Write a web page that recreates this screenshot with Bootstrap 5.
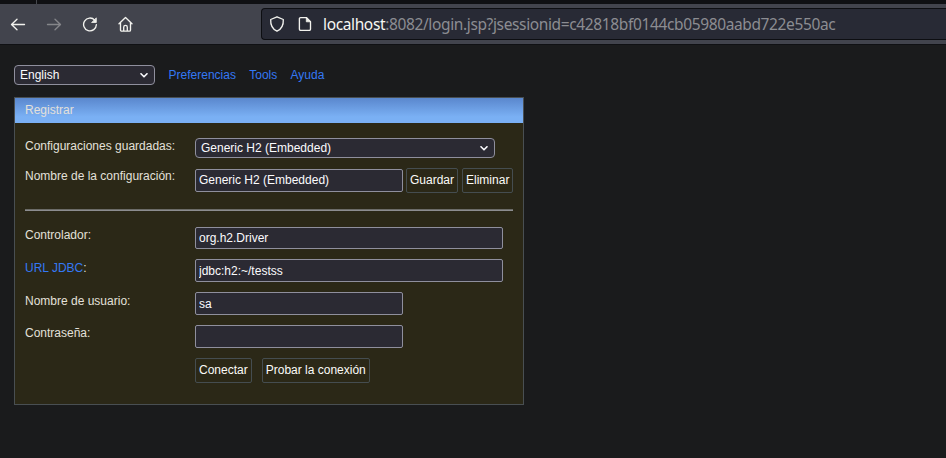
<!DOCTYPE html>
<html lang="es">
<head>
<meta charset="utf-8">
<meta name="viewport" content="width=device-width, initial-scale=1">
<title>H2 Console</title>
<link href="https://cdn.jsdelivr.net/npm/bootstrap@5.3.0/dist/css/bootstrap.min.css" rel="stylesheet">
<style>
body{background:#1a1b1c;color:#e3e0da;font:12px/16px "Liberation Sans",Arial,sans-serif;overflow:hidden}
a{color:#3478f4;text-decoration:none}
.tab-strip{height:4px;background:#0f1013}
.tab-edge{width:1px;height:4px;margin-left:36px;background:#45474d}
.toolbar{height:41px;background:#42444d;border-bottom:1px solid #101114;padding-left:10px}
.tool-set{gap:20px}
.tool-icon{width:16px;height:16px;fill:none;stroke:#f2f2ee;stroke-width:1.35;stroke-linecap:round;stroke-linejoin:round;flex:none}
.tool-icon.dim{stroke:#85868a}
.address{height:32px;margin-left:127px;padding-left:7px;background:#282a35;border:1px solid #0d0e12;border-right:0;border-radius:4px 0 0 4px}
.address-text{font:15.5px/24px "Noto Sans",sans-serif;color:#8c8d92;margin-left:10px;white-space:nowrap;letter-spacing:-.37px}
.address-text span{color:#f7f7f3}
.page{padding:20px 14px 0}
.fake-select{height:20px;background:#2b2a33;border:1px solid #8f8f9d;border-radius:4px;color:#fbfbfe;padding:0 6px 0 5px}
.fake-select svg{width:8px;height:5px;fill:none;stroke:#fbfbfe;stroke-width:1.6;stroke-linecap:round;stroke-linejoin:round}
.lang{width:141px;margin-right:13.6px}
.link-set{gap:13.3px}
.panel{width:510px;height:308px;margin-top:12px;border:1px solid #494f52;background:#2b2817}
.panel-title{height:25px;padding:4px 10px 0;background:linear-gradient(#5a87cd,#7ab0f4 75%)}
.panel-body{padding:15px 10px 0}
.line{display:grid;grid-template-columns:170px 1fr;align-items:start}
.h-30{height:30px}.h-41{height:41px}.h-32{height:32px}.h-33{height:33px}
.saved{width:300px}
.field{width:208px;height:23px;padding:0 3px;border:1px solid #8f8f9d;border-radius:2px;background:#2b2a33;color:#fbfbfe;font:inherit;outline:0}
.field.wide{width:308px}
.field.short{height:22px}
.field.named{padding-bottom:2px}
.push{height:25px;padding:0 3px;border:1px solid #454d50;border-radius:2px;background:transparent;color:#fbfbf7;font:inherit;line-height:23px;white-space:nowrap}
.guardar{margin:0 4px 0 3px}
.run-set{gap:10px}
.rule{height:2px;background:linear-gradient(#6b6b67 50%,#8c8d90 50%);margin-bottom:16px}
.drop{padding-top:1px}
</style>
<script src="https://cdn.jsdelivr.net/npm/bootstrap@5.3.0/dist/js/bootstrap.bundle.min.js"></script>
</head>
<body>
<header>
  <div class="tab-strip"><div class="tab-edge"></div></div>
  <div class="toolbar d-flex align-items-center">
    <div class="tool-set d-flex">
      <svg class="tool-icon" viewBox="0 0 16 16"><path d="M14.5 8.5H1.7M7 3.2L1.5 8.5 7 13.8"/></svg>
      <svg class="tool-icon dim" viewBox="0 0 16 16"><path d="M1.5 8.5h12.8M9 3.2l5.5 5.3L9 13.8"/></svg>
      <svg class="tool-icon" viewBox="0 0 16 16"><path d="M12.7 4.1A6.4 6.4 0 1 0 14.4 8.6"/><path d="M14.3 2.2v4.3H10z" fill="#f2f2ee" stroke-width=".8"/></svg>
      <svg class="tool-icon" viewBox="0 0 16 16"><path d="M1 7.8l6.5-6.3L14 7.8M2.5 6.8v7.1a1.2 1.2 0 0 0 1.2 1.2h7.6a1.2 1.2 0 0 0 1.2-1.2V6.8M5.7 15v-3.8a1.8 1.8 0 0 1 3.6 0V15"/></svg>
    </div>
    <div class="address d-flex align-items-center flex-grow-1">
      <svg class="tool-icon" viewBox="0 0 16 16"><path d="M8 .8L14.3 3.5C14.6 8.7 12.4 13.2 8 15.2 3.6 13.2 1.4 8.7 1.7 3.5z"/></svg>
      <svg class="tool-icon ms-2 ps-1 w-auto" viewBox="0 0 16 16"><path d="M3.6 1.6h5.8l4.1 4.1v7.4a1.2 1.2 0 0 1-1.2 1.2H3.6a1.2 1.2 0 0 1-1.2-1.2V2.8a1.2 1.2 0 0 1 1.2-1.2z"/><path d="M9.3 1.8v4h4z" fill="#f2f2ee" stroke-width=".8"/></svg>
      <div class="address-text"><span>localhost</span>:8082/login.jsp?jsessionid=c42818bf0144cb05980aabd722e550ac</div>
    </div>
  </div>
</header>
<main class="page">
  <div class="d-flex align-items-center">
    <div class="fake-select lang d-flex align-items-center justify-content-between">English <svg viewBox="0 0 8 5"><path d="M1 .8l3 3 3-3"/></svg></div>
    <nav class="link-set d-flex"><a href="#">Preferencias</a><a href="#">Tools</a><a href="#">Ayuda</a></nav>
  </div>
  <section class="panel">
    <div class="panel-title">Registrar</div>
    <form class="panel-body">
      <div class="line h-30"><label>Configuraciones guardadas:</label>
        <div class="fake-select saved d-flex align-items-center justify-content-between">Generic H2 (Embedded) <svg viewBox="0 0 8 5"><path d="M1 .8l3 3 3-3"/></svg></div></div>
      <div class="line h-41"><label>Nombre de la configuración:</label>
        <div class="d-flex align-items-center"><input class="field named" value="Generic H2 (Embedded)"><button type="button" class="push guardar">Guardar</button><button type="button" class="push">Eliminar</button></div></div>
      <div class="rule"></div>
      <div class="line h-32"><label>Controlador:</label><input class="field wide short" value="org.h2.Driver"></div>
      <div class="line h-33"><label class="drop"><a href="#">URL JDBC</a>:</label><input class="field wide" value="jdbc:h2:~/testss"></div>
      <div class="line h-33"><label class="drop">Nombre de usuario:</label><input class="field" value="sa"></div>
      <div class="line h-33"><label>Contraseña:</label><input class="field" type="password"></div>
      <div class="line"><span></span><div class="run-set d-flex"><button type="button" class="push">Conectar</button><button type="button" class="push">Probar la conexión</button></div></div>
    </form>
  </section>
</main>
</body>
</html>
